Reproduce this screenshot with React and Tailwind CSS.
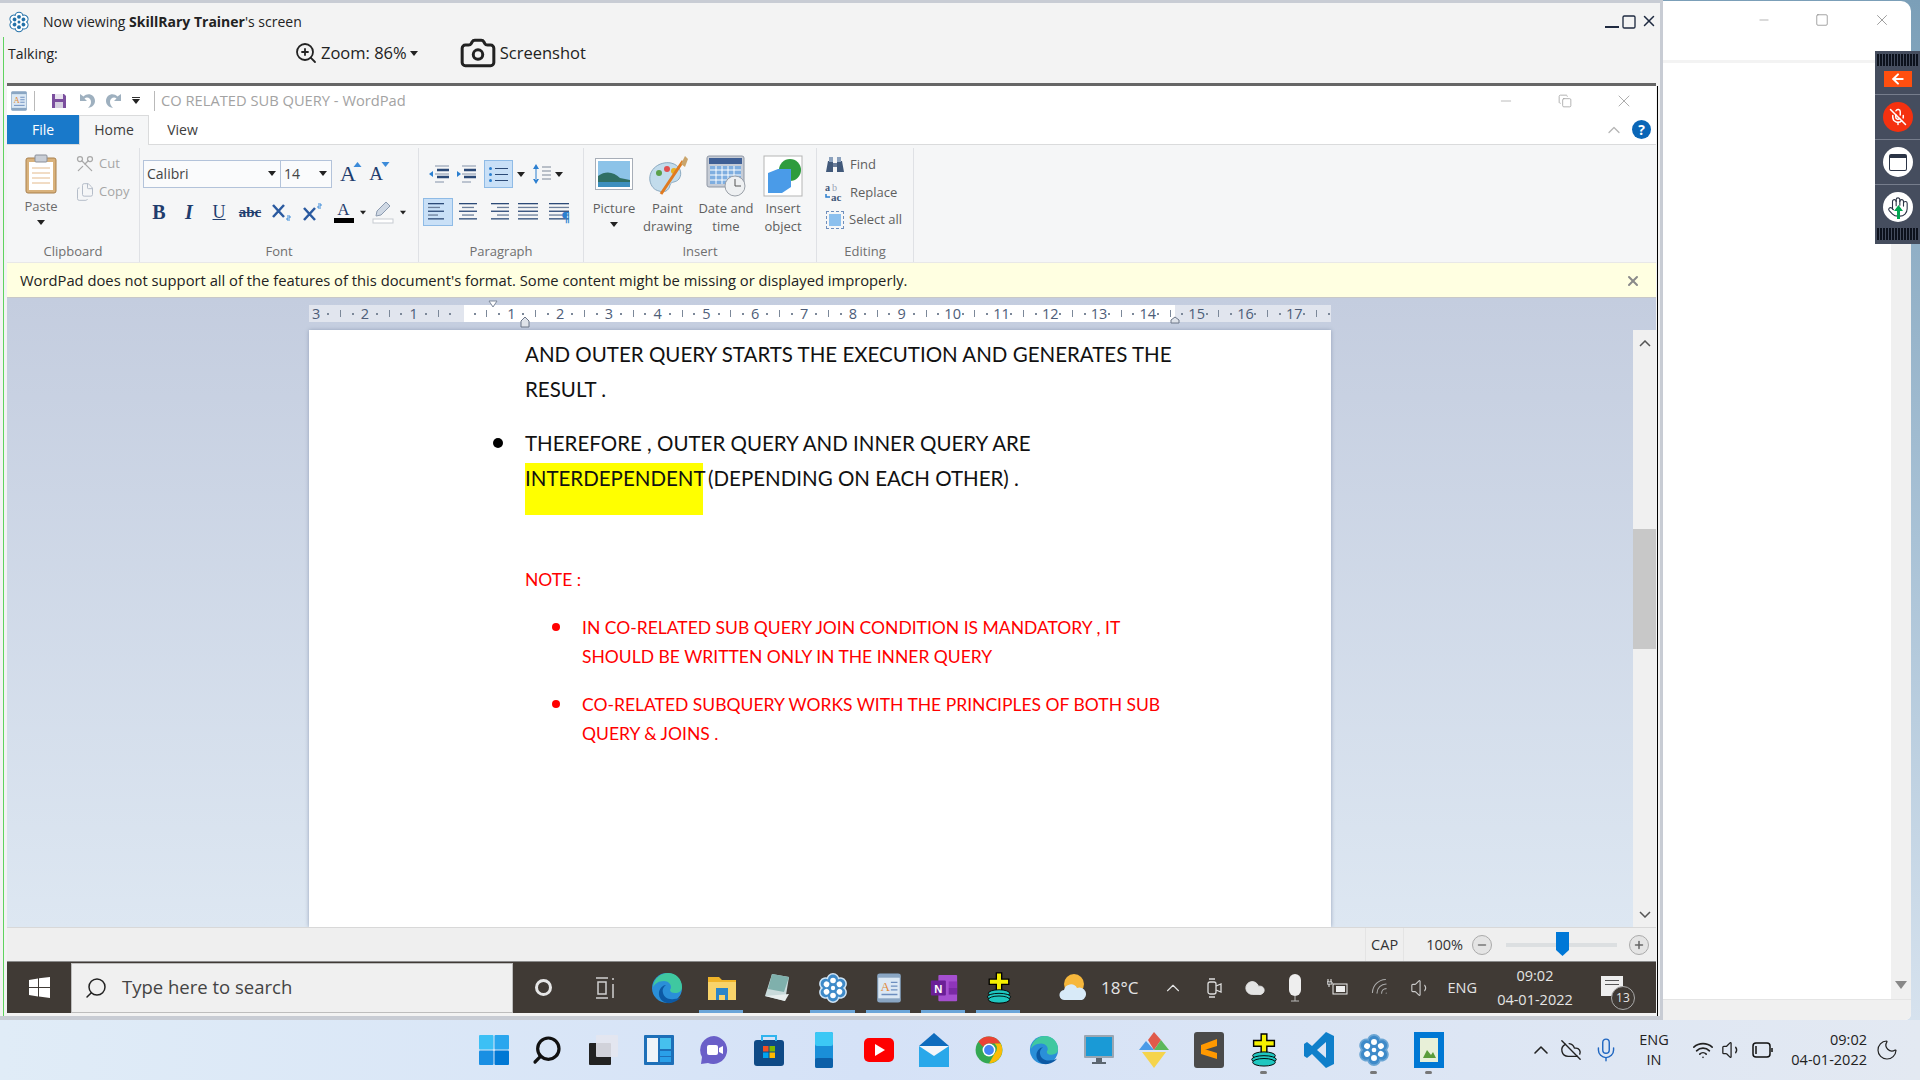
import React from 'react';
import { Scissors, Files, Camera, ZoomIn, Search, ChevronUp, X, Mic, Wifi, Volume1, Moon, Cloud, Minus, Plus, CloudOff, MicOff, ArrowLeft, Hand, Square, Copy } from 'lucide-react';

const Caret = ({ className = '' }) => (
  <svg width="8" height="5" viewBox="0 0 8 5" className={className}><path d="M0 0h8L4 5z" fill="#222" /></svg>
);

const Snow = ({ size = 32, fill = '#2f7fc0', petal = '#fff', ring = '#cfe4f5' }) => (
  <svg width={size} height={size} viewBox="0 0 32 32">
    {[0, 60, 120, 180, 240, 300].map((a) => (
      <circle key={a} cx="16" cy="7.500" r="6.500" fill={ring} transform={`rotate(${a} 16 16)`} />
    ))}
    <circle cx="16" cy="16" r="11" fill={ring} />
    {[0, 60, 120, 180, 240, 300].map((a) => (
      <circle key={a} cx="16" cy="7.500" r="5" fill={fill} transform={`rotate(${a} 16 16)`} />
    ))}
    <circle cx="16" cy="16" r="9" fill={fill} />
    {[0, 60, 120, 180, 240, 300].map((a) => (
      <circle key={a} cx="16" cy="8.500" r="2.800" fill={petal} transform={`rotate(${a} 16 16)`} />
    ))}
    <circle cx="16" cy="16" r="2.200" fill={petal} />
  </svg>
);

const Edge = ({ size = 32 }) => (
  <svg width={size} height={size} viewBox="0 0 32 32">
    <circle cx="16" cy="16" r="15" fill="#2a8fd8" />
    <path d="M2 15C3 6 10 1 17 1c8 0 14 6 14 14 0 4-3 6-7 6-3 0-5-1-5-3 0-1 1-1 1-3 0-3-3-6-7-6-6 0-9 3-11 6z" fill="#3fc8a0" />
    <path d="M20 31c-7 1-13-4-12-11 1-4 4-7 7-7-3 2-4 5-3 8 1 4 5 7 11 6 3 0 5-1 7-2-2 3-6 5-10 6z" fill="#0c59a4" />
  </svg>
);

const Folder = () => (
  <svg width="30" height="28" viewBox="0 0 30 28">
    <path d="M1 3h11l3 3h14v20H1z" fill="#f0b429" />
    <path d="M1 8h28v18H1z" fill="#f8d36a" />
    <path d="M9 14h12v12h-3v-5h-6v5H9z" fill="#2a85c9" />
  </svg>
);

const Notepad = () => (
  <svg width="28" height="32" viewBox="0 0 28 32">
    <path d="M9 2l17 3-4 24-20-5z" fill="#c9dadb" />
    <path d="M9 2l17 3-5 15-16-3z" fill="#7fb0ac" />
    <path d="M2 24l20 5 4-7z" fill="#e8eeee" />
  </svg>
);

const WordPadIcon = ({ size = 30 }) => (
  <svg width={size} height={size} viewBox="0 0 30 32">
    <rect x="3" y="1" width="24" height="30" rx="2" fill="#dbe8f4" stroke="#7d9cbc" />
    <rect x="3" y="1" width="24" height="4" fill="#8aa6c3" />
    <rect x="3" y="27" width="24" height="4" fill="#8aa6c3" />
    <text x="6" y="19" fontSize="14" fill="#e08a3c" fontFamily="Liberation Serif">A</text>
    <path d="M17 10h7M17 14h7M17 18h7M7 23h17" stroke="#6c8ebf" strokeWidth="1.500" />
  </svg>
);

const OneNote = ({ size = 30 }) => (
  <svg width={size} height={size} viewBox="0 0 30 32">
    <rect x="9" y="2" width="20" height="28" rx="1" fill="#a54fd0" />
    <rect x="20" y="9" width="9" height="7" fill="#8f35bb" />
    <rect x="20" y="16" width="9" height="7" fill="#7a2aa5" />
    <rect x="1" y="8" width="16" height="16" rx="1" fill="#6b1f97" />
    <text x="4.500" y="21" fontSize="12" fontWeight="700" fill="#fff" fontFamily="Liberation Sans">N</text>
  </svg>
);

const PlusStack = ({ size = 32 }) => (
  <svg width={size} height={size} viewBox="0 0 32 36">
    <path d="M13 1h6v7h8v6h-8v8h-6v-8H5V8h8z" fill="#f5f000" stroke="#000" strokeWidth="1.500" />
    <ellipse cx="16" cy="24" rx="12" ry="4" fill="#1fc7c0" stroke="#000" />
    <ellipse cx="16" cy="28" rx="13" ry="4" fill="#1fc7c0" stroke="#000" />
    <ellipse cx="16" cy="31" rx="12" ry="4" fill="#1fc7c0" stroke="#000" />
  </svg>
);

const Weather = () => (
  <svg width="28" height="30" viewBox="0 0 28 30">
    <circle cx="15" cy="11" r="10" fill="#f6b73c" />
    <path d="M6 27a5 5 0 0 1-1-10 7 7 0 0 1 13-2 6 6 0 0 1 5 12z" fill="#d8eaf8" />
  </svg>
);

const Chrome = () => (
  <svg width="28" height="28" viewBox="0 0 24 24">
    <circle cx="12" cy="12" r="11.500" fill="#34a853" />
    <path d="M12 .5A11.500 11.500 0 0 1 22 6.500H12a5.500 5.500 0 0 0-5 3L2.800 5A11.500 11.500 0 0 1 12 .5z" fill="#ea4335" />
    <path d="M22 6.500A11.500 11.500 0 0 1 12 23.500l4.800-8.500a5.500 5.500 0 0 0 0-8.500z" fill="#fbbc05" />
    <circle cx="12" cy="12" r="5.500" fill="#fff" />
    <circle cx="12" cy="12" r="4.200" fill="#4285f4" />
  </svg>
);

const Align = ({ kind = 'left' }) => {
  const rows = { left: [16, 12, 16, 10, 16], center: [18, 12, 18, 12, 18], right: [18, 12, 18, 12, 18], just: [20, 20, 20, 20, 20] }[kind];
  return (
    <svg width="22" height="18" viewBox="0 0 22 18">
      {rows.map((w, i) => {
        const x = kind === 'center' ? (22 - w) / 2 : kind === 'right' ? 22 - w : 1;
        return <rect key={i} x={x} y={i * 3.800} width={w} height="1.300" fill={i % 2 ? '#6c7f9b' : '#2c4a77'} />;
      })}
    </svg>
  );
};

const ListIcon = ({ flip }) => (
  <svg width="22" height="18" viewBox="0 0 22 18">
    <path d={flip ? 'M1 9l4-3v6z' : 'M6 9L2 6v6z'} fill="#2b7fd0" />
    <path d="M7 1h14M7 9h14M7 17h9" stroke="#a9b4c4" strokeWidth="1.500" />
    <path d="M9 5h12M9 12h12" stroke="#2c4a77" strokeWidth="2.500" />
  </svg>
);

const IconCell = ({ w, children, className = '' }) => (
  <div className={`flex items-center justify-center h-7 shrink-0 ${className}`} style={{ width: w }}>{children}</div>
);

const Group = ({ w, label, children }) => (
  <div className="flex flex-col h-[114px] shrink-0 border-r border-[#dfe1e5]" style={{ width: w }}>
    <div className="flex-1 min-h-0">{children}</div>
    <div className="h-[24px] leading-[26px] text-center text-[13px] text-[#6f6f6f]">{label}</div>
  </div>
);

const Ruler = () => {
  const marks = ['3', '2', '1', '', '1', '2', '3', '4', '5', '6', '7', '8', '9', '10', '11', '12', '13', '14', '15', '16', '17'];
  return (
    <div className="relative ml-[302px] mt-[7px] pl-[1px] h-[17px] w-[1022px] flex overflow-hidden bg-[linear-gradient(90deg,#e1e5ee_155px,#fff_155px,#fff_866px,#e1e5ee_866px)]">
      {marks.map((m, i) => (
        <div key={i} className="w-[48.800px] shrink-0 grid grid-cols-4 items-center text-[#4d5d78]">
          <span className="text-center text-[14.500px] leading-[17px] whitespace-nowrap">{m}</span>
          <span className="mx-auto w-[2px] h-[2px] bg-[#7c8899]" />
          <span className="mx-auto w-px h-[7px] bg-[#7c8899]" />
          <span className="mx-auto w-[2px] h-[2px] bg-[#7c8899]" />
        </div>
      ))}
    </div>
  );
};

const hatch = 'h-[12px] mx-[2px] bg-[repeating-linear-gradient(90deg,#0c111c_0_2px,#454d5e_2px_3px)]';

function RibbonHeader() {
  return (
    <>
      <div className="h-[29px] flex items-center bg-white text-[#a3a3a3]">
        <div className="ml-[2px]"><WordPadIcon size={20} /></div>
        <div className="ml-[5px] w-px h-[20px] bg-[#b9b9b9]" />
        <svg className="ml-[16px]" width="16" height="16" viewBox="0 0 16 16">
          <path d="M1 1h12l2 2v12H1z" fill="#7b4f9e" />
          <rect x="4" y="1" width="8" height="5" fill="#e8e3ee" />
          <rect x="4" y="9" width="8" height="6" fill="#d5cfe0" />
        </svg>
        <svg className="ml-[11px]" width="18" height="18" viewBox="0 0 18 18">
          <path d="M2 2v7h7L6.500 6.500C9 4.500 13 6 13 10c0 2-1 4-3 6 5-1 7-4 7-7 0-6-7-9-11.500-4.500z" fill="#9eb0bf" />
        </svg>
        <svg className="ml-[9px]" width="18" height="18" viewBox="0 0 18 18">
          <path d="M16 2v7H9l2.500-2.500C9 4.500 5 6 5 10c0 2 1 4 3 6-5-1-7-4-7-7 0-6 7-9 11.500-4.500z" fill="#9eb0bf" />
        </svg>
        <div className="ml-[9px] flex flex-col items-center gap-[1px]">
          <div className="w-[8px] h-px bg-[#333]" />
          <Caret />
        </div>
        <div className="ml-[14px] w-px h-[20px] bg-[#b9b9b9]" />
        <div className="ml-[6px] text-[14.700px]">CO RELATED SUB QUERY - WordPad</div>
        <div className="ml-auto flex items-center">
          <Minus size={16} strokeWidth={1} className="text-[#9c9c9c]" />
          <Copy size={14} strokeWidth={1.300} className="ml-[44px] text-[#9c9c9c]" />
          <X size={20} strokeWidth={1} className="ml-[42px] mr-[22px] text-[#9c9c9c]" />
        </div>
      </div>
      <div className="h-[30px] flex items-stretch bg-white border-b border-[#dadbdc] text-[14px]">
        <div className="w-[72px] bg-[#1979ca] text-white text-center leading-[29px]">File</div>
        <div className="w-[70px] h-[30px] bg-[#f5f6f7] border-x border-t border-[#dadbdc] text-[#3d3d3d] text-center leading-[28px]">Home</div>
        <div className="w-[67px] text-[#3d3d3d] text-center leading-[29px]">View</div>
        <div className="ml-auto flex items-center">
          <ChevronUp size={20} strokeWidth={1.500} className="text-[#b5b5b5]" />
          <div className="ml-[8px] mr-[5px] w-[19px] h-[19px] rounded-full bg-[#0a66b7] text-white text-[14px] font-bold text-center leading-[19px]">?</div>
        </div>
      </div>
    </>
  );
}

function Ribbon() {
  const fontBtn = 'font-["Liberation_Serif"] text-[#1f3d6e]';
  return (
    <div className="h-[118px] flex pt-[3px] bg-[#f5f6f7] border-b border-[#e8e8e8]">
      <Group w={133} label="Clipboard">
        <div className="flex">
          <div className="w-[68px] flex flex-col items-center pt-[6px] text-[13px] text-[#6b6b6b]">
            <svg width="32" height="40" viewBox="0 0 32 40">
              <rect x="1" y="4" width="30" height="35" rx="2" fill="#d9b27c" stroke="#a9804d" />
              <rect x="4" y="8" width="24" height="28" fill="#fff" />
              <path d="M7 14h18M7 19h18M7 24h18M7 29h18" stroke="#e3b98a" />
              <rect x="10" y="1" width="12" height="7" rx="1" fill="#c9ced6" stroke="#8a8f99" />
            </svg>
            <div className="mt-[3px] leading-[18px]">Paste</div>
            <Caret className="mt-[5px]" />
          </div>
          <div className="text-[13px] text-[#a6a6a6] pt-[3px]">
            <div className="flex items-center gap-[4px] h-[26px]">
              <Scissors size={20} strokeWidth={1.500} className="text-[#a9a9a9] rotate-90" />
              <span>Cut</span>
            </div>
            <div className="flex items-center gap-[4px] h-[26px] mt-[2px]">
              <Files size={20} strokeWidth={1.200} className="text-[#b5bdc9]" />
              <span>Copy</span>
            </div>
          </div>
        </div>
      </Group>
      <Group w={279} label="Font">
        <div className="pl-[3px] pt-[12px]">
          <div className="flex items-center">
            <div className="w-[138px] h-[28px] flex items-center justify-between pl-[3px] pr-[4px] pb-[2px] border border-[#b3c3da] bg-[#fafbfc] text-[14px] text-[#444]">
              <span>Calibri</span><Caret />
            </div>
            <div className="w-[52px] h-[28px] -ml-px flex items-center justify-between pl-[3px] pr-[4px] pb-[2px] border border-[#b3c3da] bg-[#fafbfc] text-[14px] text-[#444]">
              <span>14</span><Caret />
            </div>
            <div className={`relative ml-[2px] w-[28px] text-center text-[22px] leading-[24px] ${fontBtn}`}>
              A<svg className="absolute right-0 top-0" width="9" height="5" viewBox="0 0 8 5"><path d="M4 0l4 5H0z" fill="#3c8bd9" /></svg>
            </div>
            <div className={`relative w-[28px] text-center text-[19px] leading-[24px] ${fontBtn}`}>
              A<svg className="absolute right-0 top-0" width="9" height="5" viewBox="0 0 8 5"><path d="M0 0h8L4 5z" fill="#3c8bd9" /></svg>
            </div>
          </div>
          <div className="flex items-center mt-[10px] pl-[1px]">
            <IconCell w={30} className={`${fontBtn} text-[20px] font-bold`}>B</IconCell>
            <IconCell w={30} className={`${fontBtn} text-[20px] italic font-bold`}>I</IconCell>
            <IconCell w={30} className={`${fontBtn} text-[18px] underline`}>U</IconCell>
            <IconCell w={32} className={`${fontBtn} text-[15px] font-bold line-through`}>abc</IconCell>
            <IconCell w={32}>
              <svg width="22" height="20" viewBox="0 0 22 20"><path d="M2 3l11 12M13 3L2 15" stroke="#2a5aa0" strokeWidth="2.500" /><path d="M16 14h3v2h-3v2h3" stroke="#3c8bd9" fill="none" /></svg>
            </IconCell>
            <IconCell w={29}>
              <svg width="22" height="20" viewBox="0 0 22 20"><path d="M2 6l11 12M13 6L2 18" stroke="#2a5aa0" strokeWidth="2.500" /><path d="M16 2h3v2h-3v2h3" stroke="#3c8bd9" fill="none" /></svg>
            </IconCell>
            <IconCell w={33} className="flex-col">
              <span className={`${fontBtn} text-[17px] leading-[17px]`}>A</span>
              <span className="w-[20px] h-[5px] bg-black" />
            </IconCell>
            <IconCell w={6}><Caret /></IconCell>
            <IconCell w={34}>
              <svg width="22" height="24" viewBox="0 0 22 24">
                <path d="M14 2l4 4-9 9-5 1 1-5z" fill="#cfd8e4" stroke="#8c9bb0" />
                <rect x="1" y="19" width="20" height="4" fill="#fff" stroke="#c7cbd2" />
              </svg>
            </IconCell>
            <IconCell w={6}><Caret /></IconCell>
          </div>
        </div>
      </Group>
      <Group w={165} label="Paragraph">
        <div className="pt-[12px]">
          <div className="flex items-center pl-[7px]">
            <IconCell w={26}><ListIcon flip /></IconCell>
            <IconCell w={28}><ListIcon /></IconCell>
            <div className="ml-[4px] w-[29px] h-[28px] bg-[#c9e0f7] border border-[#8fbbe6] flex flex-col justify-around py-[4px] px-[4px]">
              {[0, 1, 2].map((i) => (
                <div key={i} className="flex items-center gap-[3px]">
                  <span className="w-[3px] h-[3px] rounded-full bg-[#2b7fd0]" />
                  <span className="flex-1 h-px bg-[#2c4a77]" />
                </div>
              ))}
            </div>
            <IconCell w={15}><Caret /></IconCell>
            <IconCell w={24} className="ml-[2px]">
              <svg width="20" height="20" viewBox="0 0 20 20">
                <path d="M4 0l3 5H1zM4 20l3-5H1zM3.500 4h1v12h-1z" fill="#2b7fd0" />
                <path d="M10 3h9M10 7h9M10 11h9M10 15h9" stroke="#7c8899" />
              </svg>
            </IconCell>
            <IconCell w={10}><Caret /></IconCell>
          </div>
          <div className="flex items-center mt-[10px] pl-[4px]">
            <IconCell w={30} className="bg-[#c9e0f7] border border-[#8fbbe6]"><Align /></IconCell>
            <IconCell w={30}><Align kind="center" /></IconCell>
            <IconCell w={30}><Align kind="right" /></IconCell>
            <IconCell w={30}><Align kind="just" /></IconCell>
            <IconCell w={32}>
              <div className="relative"><Align kind="just" /><span className="absolute right-0 -bottom-[3px] text-[13px] leading-[13px] font-bold text-[#2b7fd0]">¶</span></div>
            </IconCell>
          </div>
        </div>
      </Group>
      <Group w={233} label="Insert">
        <div className="flex pt-[4px] text-[13px] leading-[18px] text-[#5f5f5f] text-center">
          <div className="w-[60px] shrink-0 flex flex-col items-center">
            <div className="h-[47px] flex items-center pb-[4px]">
              <svg width="38" height="32" viewBox="0 0 38 32">
                <rect x=".5" y=".5" width="37" height="31" fill="#fff" stroke="#a7aeb8" />
                <rect x="3" y="3" width="32" height="26" fill="#8cc3e8" />
                <path d="M3 18c8-6 16-4 22 2l10 2v7H3z" fill="#2f6f64" />
                <rect x="3" y="24" width="32" height="5" fill="#3d8fbe" />
              </svg>
            </div>
            <div>Picture</div>
            <Caret className="mt-[5px]" />
          </div>
          <div className="w-[47px] shrink-0 flex flex-col items-center">
            <div className="h-[47px] flex items-center">
              <svg width="42" height="42" viewBox="0 0 42 42">
                <path d="M3 26C1 14 13 6 24 8c9 2 12 10 8 16-3 4-8 2-9 6-1 6-6 8-11 6-5-1-8-5-9-10z" fill="#c2dcec" stroke="#8aa9c0" />
                <circle cx="12" cy="18" r="3" fill="#5aa04a" />
                <circle cx="20" cy="14" r="3" fill="#e05050" />
                <circle cx="27" cy="16" r="3" fill="#e8b020" />
                <path d="M14 39L36 6" stroke="#e07a1f" strokeWidth="3" />
                <path d="M34 9l4-8 3 3-3 8z" fill="#caa56c" />
              </svg>
            </div>
            <div>Paint drawing</div>
          </div>
          <div className="w-[70px] shrink-0 flex flex-col items-center">
            <div className="h-[47px] flex items-center">
              <svg width="40" height="42" viewBox="0 0 40 42">
                <rect x="1" y="1" width="37" height="31" rx="2" fill="#c6ccd6" stroke="#8f97a4" />
                <rect x="3" y="3" width="33" height="6" fill="#3f5f95" />
                <rect x="4" y="11" width="31" height="18" fill="#7faee0" />
                <path d="M4 15h31M4 20h31M4 25h31M10 11v18M16 11v18M22 11v18M28 11v18" stroke="#fff" />
                <circle cx="29" cy="31" r="10" fill="#eef0f2" stroke="#9aa0a8" />
                <path d="M29 24v7h6" stroke="#555" fill="none" />
              </svg>
            </div>
            <div>Date and time</div>
          </div>
          <div className="w-[44px] shrink-0 flex flex-col items-center">
            <div className="h-[47px] flex items-center">
              <svg width="40" height="42" viewBox="0 0 40 42">
                <rect x="1" y="1" width="38" height="40" fill="#fff" stroke="#b5b5b5" />
                <circle cx="27" cy="15" r="11" fill="#2e9c3d" />
                <path d="M5 18l10-4h13v18l-9 6H5z" fill="#4a9be8" />
              </svg>
            </div>
            <div>Insert object</div>
          </div>
        </div>
      </Group>
      <Group w={97} label="Editing">
        <div className="pl-[8px] pt-[3px] text-[13px] text-[#5f5f5f] leading-[27px]">
          <div className="flex items-center gap-[5px] h-[27px]">
            <svg width="20" height="18" viewBox="0 0 20 18">
              <path d="M1 16l2-11h5v11zM12 16V5h5l2 11z" fill="#41597a" />
              <rect x="4" y="1" width="4" height="5" fill="#8ba1bd" /><rect x="12" y="1" width="4" height="5" fill="#8ba1bd" />
              <rect x="8" y="7" width="4" height="4" fill="#6c7f9b" />
            </svg>
            <span>Find</span>
          </div>
          <div className="flex items-center gap-[5px] h-[28px]">
            <svg width="20" height="20" viewBox="0 0 20 20">
              <text x="0" y="9" fontSize="10" fontWeight="700" fill="#41597a" fontFamily="Liberation Serif">a</text>
              <text x="7" y="9" fontSize="10" fill="#9aa5b5" fontFamily="Liberation Serif">b</text>
              <text x="6" y="19" fontSize="11" fontWeight="700" fill="#41597a" fontFamily="Liberation Serif">ac</text>
              <path d="M1 12v3h4" stroke="#2b7fd0" fill="none" strokeWidth="1.500" />
            </svg>
            <span>Replace</span>
          </div>
          <div className="flex items-center gap-[4px] h-[27px]">
            <div className="w-[18px] h-[18px] ml-[1px] mr-[1px] border border-dashed border-[#6f8fbd] p-[2px]"><div className="h-full bg-[#8cc0ee]" /></div>
            <span>Select all</span>
          </div>
        </div>
      </Group>
    </div>
  );
}

function Page() {
  return (
    <div className="ml-[302px] w-[1022px] h-[597px] bg-white shadow-[0_0_4px_#93a0b8] pl-[216px] pt-[7px] font-['Lato'] overflow-hidden">
      <div className="text-[20.500px] leading-[35px] text-[#111]">
        <div>AND OUTER QUERY STARTS THE EXECUTION AND GENERATES THE</div>
        <div>RESULT .</div>
        <div className="relative mt-[19px]">
          <span className="absolute -left-[32px] top-[12px] w-[10px] h-[10px] rounded-full bg-black" />
          THEREFORE , OUTER QUERY AND INNER QUERY ARE
        </div>
        <div className="flex items-start mt-[1.500px] h-[52px] leading-[30px]">
          <span className="w-[178px] h-[52px] bg-[#ffff00]">INTERDEPENDENT</span>
          <span className="ml-[5px]">(DEPENDING ON EACH OTHER) .</span>
        </div>
      </div>
      <div className="text-[17.500px] text-[#ff0000] leading-[29px]">
        <div className="mt-[50px]">NOTE :</div>
        <div className="relative mt-[19px] pl-[57px]">
          <span className="absolute left-[27px] top-[10px] w-[8px] h-[8px] rounded-full bg-[#ff0000]" />
          <div>IN CO-RELATED SUB QUERY JOIN CONDITION IS MANDATORY , IT</div>
          <div>SHOULD BE WRITTEN ONLY IN THE INNER QUERY</div>
        </div>
        <div className="relative mt-[19px] pl-[57px]">
          <span className="absolute left-[27px] top-[10px] w-[8px] h-[8px] rounded-full bg-[#ff0000]" />
          <div>CO-RELATED SUBQUERY WORKS WITH THE PRINCIPLES OF BOTH SUB</div>
          <div>QUERY &amp; JOINS .</div>
        </div>
      </div>
    </div>
  );
}

function InnerTaskbar() {
  const items = [
    { w: 55, el: <Edge size={32} /> },
    { w: 55, el: <Folder />, on: true },
    { w: 56, el: <Notepad /> },
    { w: 56, el: <Snow size={32} fill="#3e8ac9" />, on: true },
    { w: 55, el: <WordPadIcon size={30} />, on: true },
    { w: 55, el: <OneNote />, on: true },
    { w: 55, el: <PlusStack />, on: true },
  ];
  return (
    <div className="h-[52px] flex items-center bg-[#403a35] border-t border-[#8a8a8a] text-[#e4e4e4]">
      <div className="w-[64px] flex justify-center">
        <svg width="21" height="21" viewBox="0 0 21 21"><path d="M0 3l9-1.500V10H0zM10 1.300L21 0v10H10zM0 11h9v8.500L0 18zM10 11h11v10l-11-1.500z" fill="#fff" /></svg>
      </div>
      <div className="w-[442px] h-[50px] flex items-center bg-[#f0f0f0] border border-[#bdbdbd] text-[#444]">
        <Search size={24} strokeWidth={1.500} className="ml-[12px] -scale-x-100 text-[#222]" />
        <span className="ml-[14px] text-[18.500px] pb-[2px]">Type here to search</span>
      </div>
      <div className="ml-[22px] w-[17px] h-[17px] rounded-full border-[3px] border-[#e6e6e6]" />
      <svg className="ml-[43px]" width="22" height="24" viewBox="0 0 22 24" fill="none" stroke="#cfcfcf">
        <path d="M1 2h12M1 22h12M3 6h8v12H3zM18 2v2M18 8v14" strokeWidth="1.500" />
      </svg>
      <div className="ml-[22px] flex">
        {items.map((it, i) => (
          <div key={i} className="relative h-[50px] flex items-center justify-center" style={{ width: it.w }}>
            {it.el}
            {it.on && <span className="absolute bottom-0 left-[5px] right-[6px] h-[3px] bg-[#6ca6d9]" />}
          </div>
        ))}
      </div>
      <div className="ml-[33px] flex items-center gap-[14px]">
        <Weather />
        <span className="text-[17px]">18°C</span>
      </div>
      <ChevronUp size={22} strokeWidth={1.200} className="ml-[24px]" />
      <svg className="ml-[22px]" width="16" height="22" viewBox="0 0 16 22" fill="none" stroke="#ddd" strokeWidth="1.300">
        <rect x="2" y="5" width="8" height="12" rx="2" /><path d="M10 9l5-2v8l-5-2M3 2h6M3 20h6" />
      </svg>
      <Cloud size={22} fill="#e4e4e4" strokeWidth={1} className="ml-[22px]" />
      <svg className="ml-[22px]" width="14" height="28" viewBox="0 0 14 28">
        <rect x="1" y="0" width="12" height="22" rx="6" fill="#eee" />
        <path d="M7 22v5M3 27h8" stroke="#bbb" />
      </svg>
      <svg className="ml-[25px]" width="22" height="22" viewBox="0 0 22 22">
        <rect x="6" y="7" width="14" height="10" fill="none" stroke="#eee" />
        <rect x="9" y="9" width="9" height="6" fill="#eee" />
        <path d="M1 2v3M4 2v3M0 5h5v2H0zM2 7v3" stroke="#eee" />
      </svg>
      <Wifi size={22} strokeWidth={1.200} className="ml-[21px] text-[#aaa] -rotate-45" />
      <Volume1 size={22} strokeWidth={1.200} className="ml-[18px] text-[#ccc]" />
      <span className="ml-[15px] text-[14.500px]">ENG</span>
      <div className="ml-[16px] w-[84px] text-center text-[14.500px] leading-[24px]">
        <div>09:02</div>
        <div>04-01-2022</div>
      </div>
      <div className="relative ml-[24px] w-[24px] h-[24px]">
        <div className="w-[22px] h-[20px] bg-[#eee] px-[4px] py-[4px]"><div className="h-px bg-[#555]" /><div className="h-px mt-[3px] bg-[#555]" /></div>
        <div className="absolute -right-[10px] -bottom-[10px] w-[24px] h-[24px] rounded-full bg-[#403a35] border border-[#aaa] text-center text-[12px] leading-[22px]">13</div>
      </div>
    </div>
  );
}

function Win11Taskbar() {
  const icons = [
    <svg key="win" width="30" height="30" viewBox="0 0 30 30"><rect width="14.500" height="14.500" rx="1" fill="#3cc0f5" /><rect x="15.500" width="14.500" height="14.500" rx="1" fill="#2aa6ee" /><rect y="15.500" width="14.500" height="14.500" rx="1" fill="#1a8fe3" /><rect x="15.500" y="15.500" width="14.500" height="14.500" rx="1" fill="#0078d4" /></svg>,
    <Search key="search" size={32} strokeWidth={2.400} className="-scale-x-100 -ml-[3px] text-[#111]" />,
    <svg key="task" width="30" height="30" viewBox="0 0 30 30"><rect y="8" width="22" height="22" rx="1" fill="#222" /><rect x="7" y="0" width="22" height="22" rx="1" fill="#e4e6ee" fillOpacity=".9" /></svg>,
    <svg key="widgets" width="30" height="30" viewBox="0 0 30 30"><rect width="30" height="30" rx="1" fill="#1d6fb8" /><rect x="3" y="3" width="11" height="24" fill="#eef3f8" /><rect x="16" y="3" width="11" height="11" fill="#46c0ee" /><rect x="16" y="16" width="11" height="5" fill="#2aa0e8" /><rect x="16" y="22" width="11" height="5" fill="#2aa0e8" /></svg>,
    <svg key="chat" width="30" height="30" viewBox="0 0 30 30"><path d="M15 1a14 14 0 1 1-6 27l-7 1 1-7A14 14 0 0 1 15 1z" fill="#6a5fc8" /><rect x="8" y="10" width="11" height="10" rx="2" fill="#fff" /><path d="M20 13l4-2v8l-4-2z" fill="#fff" /></svg>,
    <svg key="store" width="30" height="32" viewBox="0 0 30 32"><rect y="6" width="30" height="26" rx="3" fill="#0f4a86" /><path d="M8 7V2h14v5" fill="none" stroke="#30b4ee" strokeWidth="2" /><rect x="9" y="12" width="5.500" height="5.500" fill="#f25022" /><rect x="15.500" y="12" width="5.500" height="5.500" fill="#7fba00" /><rect x="9" y="18.500" width="5.500" height="5.500" fill="#00a4ef" /><rect x="15.500" y="18.500" width="5.500" height="5.500" fill="#ffb900" /></svg>,
    <svg key="phone" width="18" height="36" viewBox="0 0 18 36"><rect width="18" height="36" rx="2" fill="#1a8fd8" /><rect width="18" height="14" rx="2" fill="#3cc8f5" /><rect y="26" width="18" height="10" rx="2" fill="#0c5fa8" /></svg>,
    <svg key="yt" width="30" height="24" viewBox="0 0 30 24"><rect width="30" height="24" rx="5" fill="#f00" /><path d="M11 6l10 6-10 6z" fill="#fff" /></svg>,
    <svg key="mail" width="30" height="34" viewBox="0 0 30 34"><path d="M0 13L15 0l15 13v21H0z" fill="#0f6cbd" /><path d="M0 13h30v21H0z" fill="#29a8ea" /><path d="M0 13h30L15 23z" fill="#f3f6fa" /></svg>,
    <Chrome key="chrome" />,
    <Edge key="edge" size={30} />,
    <svg key="monitor" width="30" height="30" viewBox="0 0 30 30"><rect width="30" height="23" rx="1" fill="#9aa6b2" /><rect x="2" y="2" width="26" height="19" fill="#1a9ad6" /><rect x="12" y="23" width="6" height="4" fill="#5c6670" /><rect x="8" y="27" width="14" height="2" fill="#5c6670" /></svg>,
    <svg key="git" width="30" height="36" viewBox="0 0 30 36"><path d="M15 18L0 18l7-9z" fill="#4a9be8" /><path d="M9 8l6-8 7 8-7 10z" fill="#e05a4a" /><path d="M15 18l7-10 8 10z" fill="#5cb85c" /><path d="M3 20h24L15 36z" fill="#f5d44c" /></svg>,
    <svg key="sublime" width="30" height="36" viewBox="0 0 30 36"><rect width="30" height="36" rx="3" fill="#4a4a4a" /><path d="M23 7L7 13v6l16-5zM7 22l16 5v-6L7 16z" fill="#ff9800" /></svg>,
    <PlusStack key="plus" size={34} />,
    <svg key="code" width="30" height="36" viewBox="0 0 30 36"><path d="M22 0l8 4v28l-8 4-14-14-5 4-3-2V12l3-2 5 4zM22 10l-9 8 9 8z" fill="#0f7fca" /></svg>,
    <Snow key="snow" size={34} fill="#3e8ac9" ring="#6aa5d4" />,
    <div key="wp" className="w-[30px] h-[36px] bg-[#0078d4] flex items-center justify-center"><svg width="18" height="24" viewBox="0 0 18 24"><rect width="18" height="24" fill="#e8f0d8" /><path d="M3 20l4-8 4 5 2-3 3 6z" fill="#5b9c3b" /></svg></div>,
  ];
  const dotted = [14, 16, 17];
  return (
    <div className="h-[60px] flex items-center pl-[466px] bg-[linear-gradient(90deg,#e0ecf7,#d5e2f7_45%,#e3e9f2)] text-[#222]">
      {icons.map((ic, i) => (
        <div key={i} className="relative w-[55px] h-[60px] flex items-center justify-center">
          {ic}
          {dotted.includes(i) && <span className="absolute bottom-[6px] w-[7px] h-[3px] rounded-sm bg-[#777]" />}
        </div>
      ))}
      <ChevronUp size={24} strokeWidth={1.600} className="ml-[73px]" />
      <CloudOff size={22} strokeWidth={1.500} className="ml-[7px]" />
      <Mic size={26} strokeWidth={1.300} className="ml-[11px] text-[#1f66c1]" />
      <div className="ml-[17px] w-[36px] text-center text-[14.500px] leading-[20px]"><div>ENG</div><div>IN</div></div>
      <Wifi size={22} strokeWidth={1.800} className="ml-[20px]" />
      <Volume1 size={22} strokeWidth={1.400} className="ml-[7px]" />
      <svg className="ml-[9px]" width="22" height="16" viewBox="0 0 22 16" fill="none" stroke="#111" strokeWidth="1.500"><rect x="1" y="1" width="17" height="14" rx="3" /><path d="M4 4v8M20 6v4" /></svg>
      <div className="ml-auto text-right text-[14.500px] leading-[20px]"><div>09:02</div><div>04-01-2022</div></div>
      <Moon size={24} strokeWidth={1.200} className="ml-[8px] mr-[21px]" />
    </div>
  );
}

function FloatBar() {
  return (
    <div className="absolute left-[1875px] top-[51px] w-[45px] h-[193px] bg-[#454d5e] pt-[3px] flex flex-col">
      <div className={hatch} />
      <div className="h-[29px] border-b border-[#767d8c] flex justify-center items-start pt-[5px]">
        <div className="w-[28px] h-[16px] bg-[#ff4f0f] flex items-center justify-center"><ArrowLeft size={16} strokeWidth={3} className="text-white" /></div>
      </div>
      <div className="h-[45px] border-b border-[#767d8c] flex justify-center items-center">
        <div className="w-[30px] h-[30px] rounded-full bg-[#f5310f] flex items-center justify-center"><MicOff size={18} className="text-white" /></div>
      </div>
      <div className="h-[45px] border-b border-[#767d8c] flex justify-center items-center">
        <div className="w-[30px] h-[30px] rounded-full bg-white flex items-center justify-center">
          <div className="w-[18px] h-[17px] rounded-[2px] border-[1.500px] border-[#2b3446] border-t-[4px]" />
        </div>
      </div>
      <div className="h-[43px] flex justify-center items-center">
        <div className="relative w-[30px] h-[30px] rounded-full bg-white flex items-center justify-center">
          <Hand size={22} strokeWidth={1.200} className="text-[#2b3446]" />
          <svg className="absolute left-[11px] top-[13px]" width="9" height="14" viewBox="0 0 9 14"><path d="M4.500 0L9 6H6v8H3V6H0z" fill="#00a651" /></svg>
        </div>
      </div>
      <div className={hatch} />
    </div>
  );
}

const App = () => {
  return (
    <div className="relative w-[1920px] h-[1080px] overflow-hidden bg-[linear-gradient(180deg,#7b9fb8,#a9c2d6_50%,#dce6f1)] font-['Open_Sans','Noto_Sans',sans-serif]">
      <div className="flex h-[1020px]">
        <div className="relative w-[1663px] shrink-0 bg-[#f3f3f3] border-t-[3px] border-r-[3px] border-b-[4px] border-[#c8ccd4] pl-[7px] flex flex-col">
          <div className="h-[37px] -ml-[7px] pl-[7px] flex items-center text-[14px] text-[#222]">
            <div className="ml-[1px]"><Snow size={22} fill="#fff" petal="#2170a8" ring="#2170a8" /></div>
            <div className="ml-[13px]">Now viewing <b>SkillRary Trainer</b>'s screen</div>
          </div>
          <div className="h-[43px] -ml-[7px] pl-[8px] flex items-center text-[#222] pb-[17px]">
            <span className="text-[14px] w-[286px]">Talking:</span>
            <ZoomIn size={24} strokeWidth={1.800} />
            <span className="ml-[3px] text-[16.500px]">Zoom: 86%</span>
            <Caret className="ml-[3px]" />
            <Camera size={38} strokeWidth={1.900} className="ml-[41px]" />
            <span className="ml-[3px] text-[16.500px]">Screenshot</span>
          </div>
          <div className="w-[1649px] h-[930px] flex flex-col border-t-[3px] border-[#666] overflow-hidden">
            <RibbonHeader />
            <Ribbon />
            <div className="h-[35px] flex items-center justify-between pl-[13px] pr-[15px] pt-[1px] bg-[#ffffe1] border-b border-[#c8c8c8] text-[14.750px] text-[#222]">
              <span>WordPad does not support all of the features of this document's format. Some content might be missing or displayed improperly.</span>
              <X size={16} strokeWidth={3} className="text-[#8a8a8a]" />
            </div>
            <div className="h-[629px] bg-[linear-gradient(180deg,#c4cddf,#dde7f2)] flex flex-col">
              <div className="relative h-[32px]">
                <Ruler />
                <svg className="absolute left-[481px] top-[2px]" width="10" height="8" viewBox="0 0 10 8"><path d="M1 1h8L5 7z" fill="#fff" stroke="#7c8899" /></svg>
                <svg className="absolute left-[513px] top-[18px]" width="10" height="12" viewBox="0 0 10 12"><path d="M1 5l4-4 4 4v6H1z" fill="#dfe3ea" stroke="#6c7688" /></svg>
                <svg className="absolute left-[1163px] top-[18px]" width="10" height="8" viewBox="0 0 10 8"><path d="M1 4l4-3 4 3v3H1z" fill="#dfe3ea" stroke="#6c7688" /></svg>
              </div>
              <div className="flex-1 flex min-h-0">
                <div className="w-[1626px] shrink-0"><Page /></div>
                <div className="w-[23px] flex flex-col items-center bg-[#f0f0f0]">
                  <svg className="mt-[10px]" width="12" height="7" viewBox="0 0 12 7"><path d="M1 6l5-5 5 5" fill="none" stroke="#555" strokeWidth="1.500" /></svg>
                  <div className="mt-[182px] w-full h-[120px] bg-[#c8c8c8]" />
                  <svg className="mt-auto mb-[9px]" width="12" height="7" viewBox="0 0 12 7"><path d="M1 1l5 5 5-5" fill="none" stroke="#555" strokeWidth="1.500" /></svg>
                </div>
              </div>
            </div>
            <div className="h-[34px] flex items-center justify-end bg-[#efefef] border-t border-[#d8d8d8] text-[14.500px] text-[#333]">
              <div className="h-full flex items-center px-[5px] border-x border-[#e4e4e4]">CAP</div>
              <span className="ml-[22px]">100%</span>
              <div className="ml-[9px] w-[20px] h-[20px] rounded-full border border-[#aaa] bg-[#e4e4e4] flex items-center justify-center"><Minus size={12} strokeWidth={3} className="text-[#777]" /></div>
              <div className="relative ml-[14px] w-[111px] h-[4px] bg-[#dcdfe1]">
                <svg className="absolute left-[50px] -top-[11px]" width="13" height="24" viewBox="0 0 13 24"><path d="M0 0h13v18l-6.500 6L0 18z" fill="#0078d7" /></svg>
              </div>
              <div className="ml-[12px] mr-[7px] w-[20px] h-[20px] rounded-full border border-[#aaa] bg-[#e4e4e4] flex items-center justify-center"><Plus size={12} strokeWidth={3} className="text-[#666]" /></div>
            </div>
            <InnerTaskbar />
          </div>
          <div className="absolute left-[3px] top-[34px] bottom-[0px] w-px bg-[#5fd35f]" />
          <div className="absolute right-[2px] top-[83px] bottom-[0px] w-[1px] bg-black" />
          <div className="absolute right-[2px] top-[9px] flex items-end gap-[3px] text-[#1f2a40]">
            <div className="w-[14px] h-[2px] mb-[2px] bg-[#1f2a40]" />
            <Square size={16} strokeWidth={2} className="-ml-[1px]" />
            <X size={18} strokeWidth={2} />
          </div>
        </div>
        <div className="w-[248px] flex flex-col bg-white rounded-tr-[10px] rounded-br-[6px] overflow-hidden shrink-0 mt-px">
          <div className="h-[62px] flex items-start pt-[10px] pl-[94px] gap-[44px] border-b-[3px] border-[#f3f3f3] text-[#7f7f7f]">
            <Minus size={14} strokeWidth={1} className="mt-[2px]" />
            <Square size={14} strokeWidth={1.200} className="mt-[2px]" />
            <X size={18} strokeWidth={1} />
          </div>
          <div className="flex-1 flex">
            <div className="flex-1" />
            <div className="w-[20px] bg-[#f0f0f0] flex flex-col items-center justify-end pb-[10px]">
              <svg width="12" height="8" viewBox="0 0 12 8"><path d="M0 0h12L6 8z" fill="#888" /></svg>
            </div>
          </div>
          <div className="h-[21px] bg-[#f0f0f0] border-t border-[#e4e4e4]" />
        </div>
      </div>
      <Win11Taskbar />
      <FloatBar />
    </div>
  );
};

export default App;
